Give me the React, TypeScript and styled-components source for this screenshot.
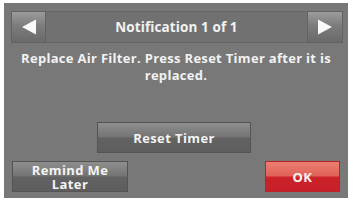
import React from "react";
import styled, { createGlobalStyle } from "styled-components";

const Global = createGlobalStyle`
  html, body {
    margin: 0;
    padding: 0;
    background: #ffffff;
  }
  body {
    font-family: "Open Sans", "DejaVu Sans", sans-serif;
  }
`;

const Frame = styled.div`
  padding: 3px 5px 6px 4px;
  width: 344px;
`;

const Screen = styled.div`
  width: 344px;
  height: 195px;
  background: #787878;
  display: flex;
  flex-direction: column;
  box-sizing: border-box;
  padding: 8px 5px 0 7px;
`;

const Header = styled.div`
  display: grid;
  grid-template-columns: 35px 1fr 36px;
  height: 32px;
  box-sizing: border-box;
  border-top: 1px solid #666;
  border-bottom: 1px solid #666;
  background: #717171;
`;

const ArrowButton = styled.div`
  display: flex;
  align-items: center;
  justify-content: center;
  background: linear-gradient(#9c9c9c 0%, #7c7c7c 45%, #6a6a6a 100%);
  border: 1px solid #626262;
  margin: -1px 0;
`;

const Title = styled.div`
  display: flex;
  align-items: center;
  justify-content: center;
  color: #f2f2f2;
  font-weight: 700;
  font-size: 13.5px;
  letter-spacing: 0.1px;
`;

const Message = styled.div`
  margin-top: 7px;
  color: #f2f2f2;
  font-weight: 700;
  font-size: 13px;
  letter-spacing: 0.3px;
  line-height: 17px;
  text-align: center;
  padding-right: 2px;
`;

const Button = styled.div<{ $w: number; $tone?: "gray" | "red" }>`
  width: ${(p) => p.$w}px;
  height: 31px;
  box-sizing: border-box;
  display: flex;
  align-items: center;
  justify-content: center;
  text-align: center;
  color: #f4f4f4;
  font-weight: 700;
  font-size: 13px;
  letter-spacing: 0.4px;
  line-height: 14px;
  border: 1px solid ${(p) => (p.$tone === "red" ? "#b82228" : "#545454")};
  background: ${(p) =>
    p.$tone === "red"
      ? "linear-gradient(#ec7e72 0%, #e06258 48%, #cc2229 52%, #c8202a 100%)"
      : "linear-gradient(#8e8e8e 0%, #747474 48%, #626262 52%, #5e5e5e 100%)"};
`;

const ResetWrap = styled.div`
  margin-top: 38px;
  margin-left: 86px;
`;

const BottomRow = styled.div`
  margin-top: 8px;
  display: flex;
  justify-content: space-between;
  padding: 0 3px 0 1px;
`;

const Arrow = ({ dir }: { dir: "left" | "right" }) => (
  <svg width="16" height="16" viewBox="0 0 16 16">
    {dir === "left" ? (
      <polygon points="1,8 15,0.5 15,15.5" fill="#fafafa" />
    ) : (
      <polygon points="15,8 1,0.5 1,15.5" fill="#fafafa" />
    )}
  </svg>
);

export default function App() {
  return (
    <Frame>
      <Global />
      <Screen>
        <Header>
          <ArrowButton>
            <Arrow dir="left" />
          </ArrowButton>
          <Title>Notification 1 of 1</Title>
          <ArrowButton>
            <Arrow dir="right" />
          </ArrowButton>
        </Header>
        <Message>
          Replace Air Filter. Press Reset Timer after it is
          <br />
          replaced.
        </Message>
        <ResetWrap>
          <Button $w={154}>Reset Timer</Button>
        </ResetWrap>
        <BottomRow>
          <Button $w={116}>
            Remind Me
            <br />
            Later
          </Button>
          <Button $w={75} $tone="red">
            OK
          </Button>
        </BottomRow>
      </Screen>
    </Frame>
  );
}
